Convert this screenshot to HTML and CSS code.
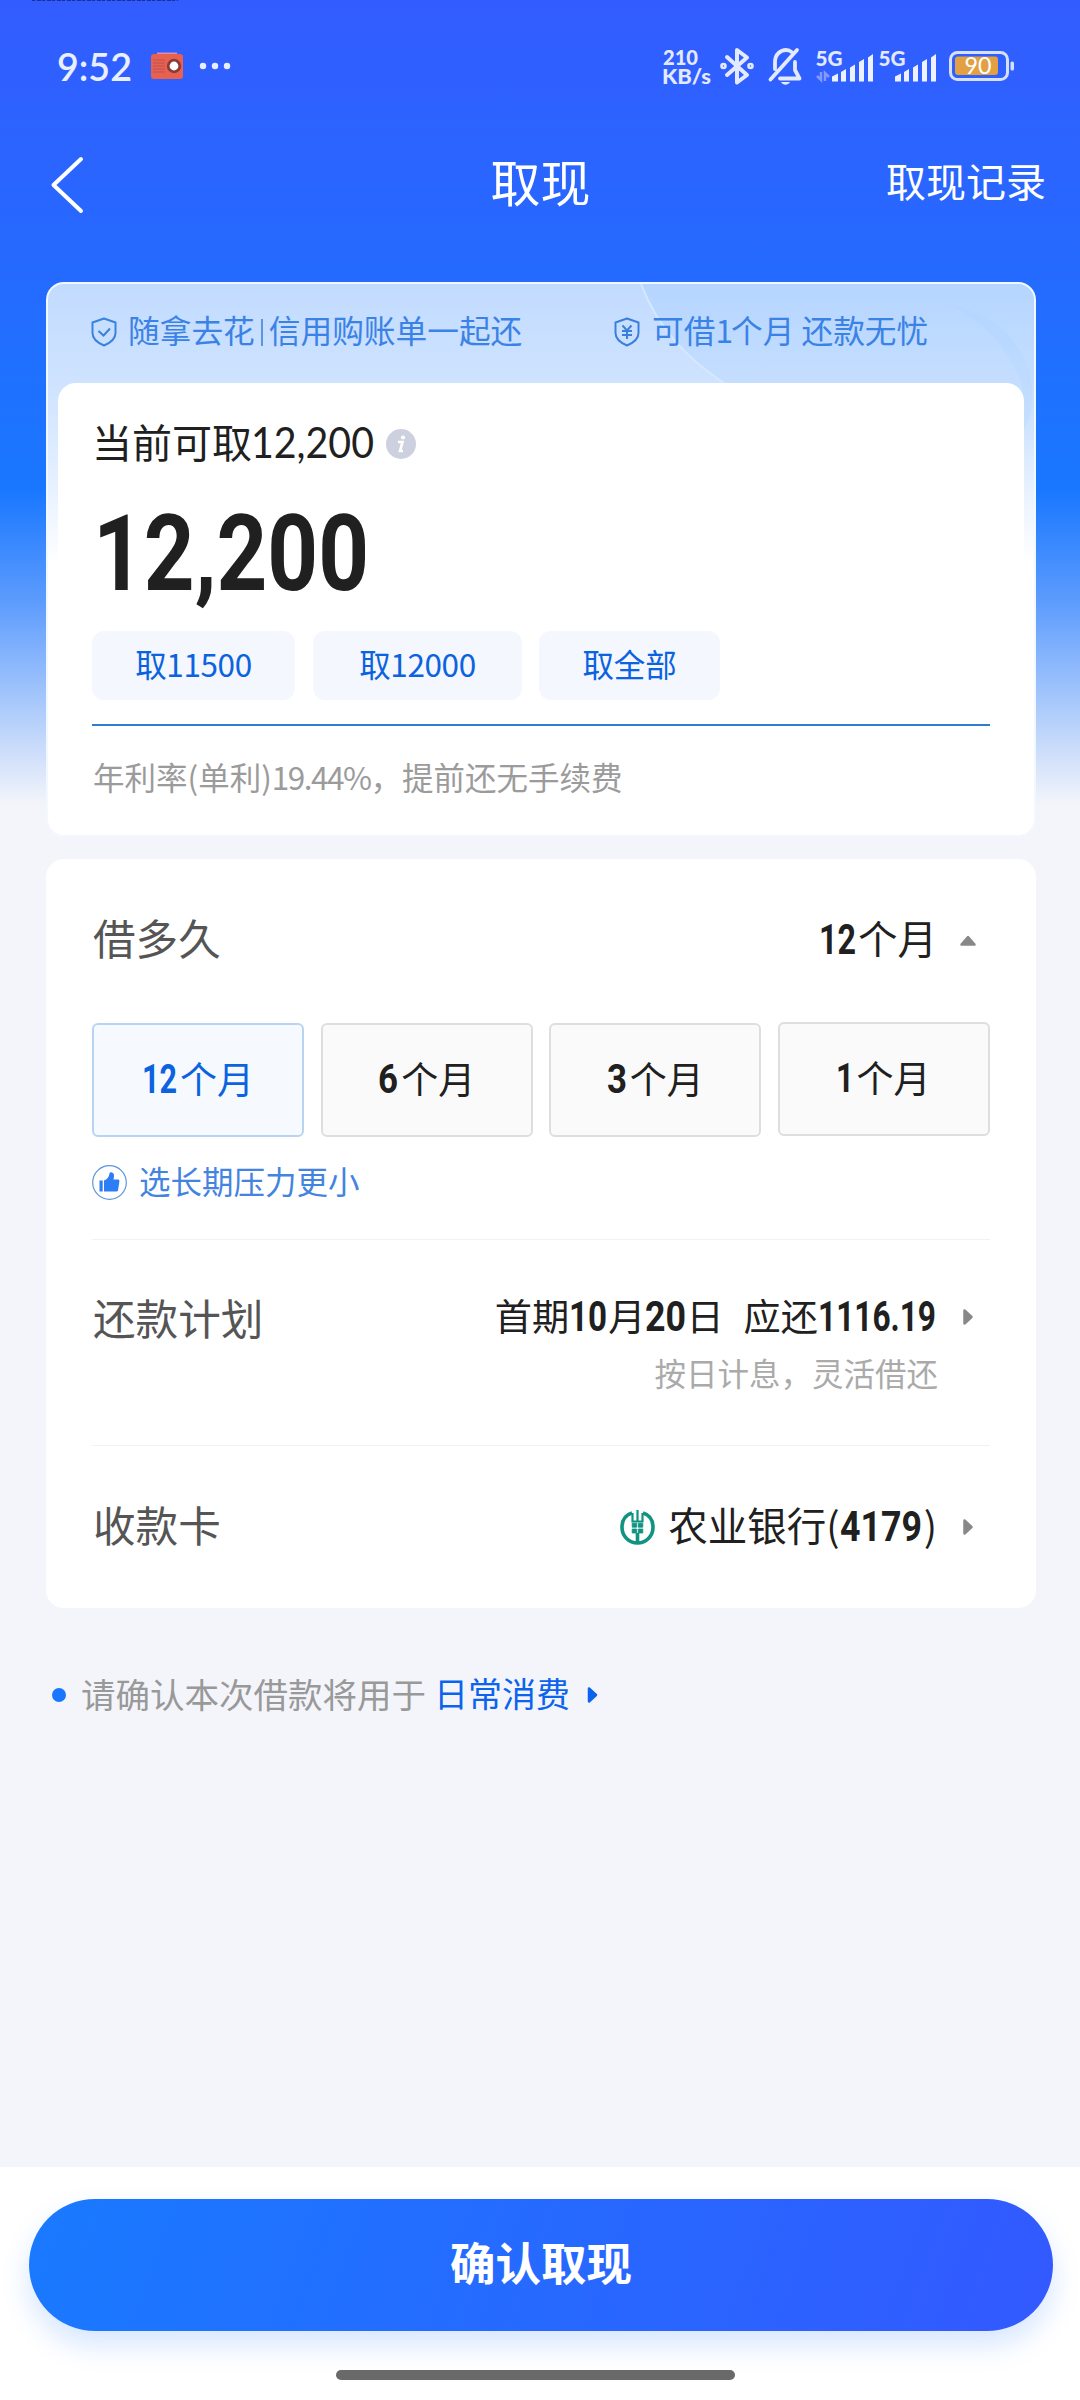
FILE: index.html
```html
<!DOCTYPE html>
<html lang="zh-CN">
<head>
<meta charset="utf-8">
<title>取现</title>
<link rel="stylesheet" href="styles.css">
</head>
<body>
<div class="screen">
  <div class="topmark"></div>
  <header class="status">
    <svg class="clock" width="74" height="28"><text x="-1" y="29" textLength="75" lengthAdjust="spacingAndGlyphs">9:52</text></svg>
    <svg class="radio" width="32" height="27" viewBox="0 0 32 27"><path d="M6 1.5h20" stroke="#d78fb8" stroke-width="2"/><rect y="2" width="32" height="25" rx="3" fill="#e8614f"/><path d="M2 8h12M2 11h12M2 14h12M2 17h12M2 20h12" stroke="#b9505c" stroke-width="1"/><circle cx="23" cy="14" r="7.2" fill="#8b3b35"/><circle cx="23" cy="14" r="4.4" fill="#fff"/></svg>
    <svg class="dots" width="32" height="8" viewBox="0 0 32 8" fill="#e9eeff"><circle cx="4" cy="4" r="3.2"/><circle cx="16" cy="4" r="3.2"/><circle cx="28" cy="4" r="3.2"/></svg>
    <div class="spacer"></div>
    <svg class="speed" width="48" height="36" viewBox="0 0 48 36"><text x="0" y="16.500" textLength="35" lengthAdjust="spacingAndGlyphs">210</text><text x="-1" y="35.500" textLength="49" lengthAdjust="spacingAndGlyphs">KB/s</text></svg>
    <svg class="bt" width="34" height="38" viewBox="0 0 34 38" fill="none" stroke="#e3e9ff" stroke-width="4" stroke-linejoin="round" stroke-linecap="round"><path d="M7 10L27 28L17 35.500V3L27 10.500L7 28"/><circle cx="3.500" cy="19" r="1.300"/><circle cx="30.500" cy="19" r="1.300"/></svg>
    <svg class="bell" width="34" height="38" viewBox="0 0 34 38" fill="none" stroke="#e3e9ff" stroke-width="3.800" stroke-linejoin="round" stroke-linecap="round"><path d="M7 22V15C7 7 13 3 18 3C20 3 22 3.500 23.500 5M29 3L2.500 32.500M12 31.500H31.500L27 23V15"/><path d="M13 35h9c-2 3.500-7 3.500-9 0z" fill="#e3e9ff" stroke="none"/></svg>
    <svg class="signal" width="58" height="34" viewBox="0 0 58 34"><text x="-.500" y="17" textLength="27" lengthAdjust="spacingAndGlyphs">5G</text><g fill="#edf1ff"><path d="M16 27.500l6-3v8h-6zM25 23l5-3v12.500h-5zM34 18.500l5-3v17h-5zM43 13l5-3v22.500h-5zM52 8.500l5-3.500v27.500h-5z"/></g><path d="M5 23v8l-4-4M9 32v-8l4 4" fill="none" stroke="#8498ff" stroke-width="2.500"/></svg>
    <svg class="signal second" width="58" height="34" viewBox="0 0 58 34"><text x="-.500" y="17" textLength="27" lengthAdjust="spacingAndGlyphs">5G</text><g fill="#edf1ff"><path d="M16 27.500l6-3v8h-6zM25 23l5-3v12.500h-5zM34 18.500l5-3v17h-5zM43 13l5-3v22.500h-5zM52 8.500l5-3.500v27.500h-5z"/></g></svg>
    <svg class="battery" width="66" height="30" viewBox="0 0 66 30"><rect x="1.500" y="1.500" width="57" height="27" rx="7" fill="none" stroke="#d5e0ff" stroke-width="3"/><rect x="6" y="5.500" width="43" height="18.500" rx="3" fill="#e2a043"/><rect x="61.500" y="10.500" width="3.500" height="9" rx="1.500" fill="#d5e0ff"/><text x="15.500" y="23.300" textLength="27" lengthAdjust="spacingAndGlyphs">90</text></svg>
  </header>

  <nav class="nav">
    <svg class="back" width="34" height="58" viewBox="0 0 34 58"><path d="M31 3L3.500 29L31 55" fill="none" stroke="#fff" stroke-width="4" stroke-linecap="round" stroke-linejoin="round"/></svg>
    <h1>取现</h1>
    <a class="records">取现记录</a>
  </nav>

  <section class="quota">
    <svg class="arcs" width="986" height="300" viewBox="0 0 986 300"><defs><linearGradient id="g" x1="0" y1="0" x2="0" y2="1"><stop offset="0" stop-color="#aed2ff" stop-opacity=".6"/><stop offset=".6" stop-color="#b9d8ff" stop-opacity=".3"/><stop offset="1" stop-color="#fff" stop-opacity="0"/></linearGradient></defs><path d="M593 0C610 45 640 75 676 99L986 240V0z" fill="url(#g)"/><path d="M593 0C610 45 640 75 676 99" fill="none" stroke="#d6e8ff" stroke-width="2"/><path d="M900 20C950 30 984 65 984 110C984 130 980 140 974 148V100C960 60 930 35 900 20z" fill="#a9d1ff" opacity=".2"/></svg>
    <div class="perks">
      <svg width="26" height="30" viewBox="0 0 26 30" fill="none" stroke="#3b82dd" stroke-width="2"><path d="M13 1.500L24.500 5.500V16C24.500 22 19 26 13 28.500C7 26 1.500 22 1.500 16V5.500z" stroke-linejoin="round"/><path d="M7.500 14l5 4.500L19 11.500"/></svg>
      <span class="perk-a">随拿去花<i></i>信用购账单一起还</span>
      <svg class="yen" width="26" height="30" viewBox="0 0 26 30" fill="none" stroke="#3b7fdc" stroke-width="2"><path d="M13 1.500L24.500 5.500V16C24.500 22 19 26 13 28.500C7 26 1.500 22 1.500 16V5.500z" stroke-linejoin="round"/><path d="M8.500 8.500l4.500 5l4.500-5M13 13.500V22M8 14h10M8 18h10"/></svg>
      <span class="perk-b">可借<span>1</span>个月&nbsp;还款无忧</span>
    </div>
    <div class="amount">
      <div class="avail"><span>当前可取</span><svg class="lat" width="124" height="31"><text x="-1" y="31" textLength="123" lengthAdjust="spacingAndGlyphs">12,200</text></svg><svg class="info" width="30" height="30" viewBox="0 0 30 30"><circle cx="15" cy="15" r="15" fill="#cdd0df"/><circle cx="17" cy="8.500" r="2.100" fill="#fff"/><path d="M12 13h4.500l-2.500 9h3" fill="none" stroke="#fff" stroke-width="2.600"/></svg></div>
      <svg class="num big" width="270" height="77"><text x="-4" y="77" textLength="276" lengthAdjust="spacingAndGlyphs">12,200</text></svg>
      <div class="chips"><span class="c1">取11500</span><span class="c2">取12000</span><span class="c3">取全部</span></div>
      <p class="rate">年利率(单利)<span>19.44%</span>，提前还无手续费</p>
    </div>
  </section>

  <section class="details">
    <div class="row term">
      <span class="label">借多久</span>
      <span class="value"><svg class="num" width="37" height="30"><text x="0" y="30" textLength="37" lengthAdjust="spacingAndGlyphs">12</text></svg>个月</span>
      <svg class="caret" width="18" height="16" viewBox="0 0 18 16"><path d="M2.500 12.500L9 5l6.500 7.500z" fill="#888" stroke="#888" stroke-width="2.500" stroke-linejoin="round"/></svg>
    </div>
    <div class="options">
      <div class="opt on"><svg class="num" width="35" height="28"><text x="0" y="27" textLength="35" lengthAdjust="spacingAndGlyphs">12</text></svg>个月</div>
      <div class="opt"><svg class="num" width="20" height="28"><text x="0" y="27" textLength="20" lengthAdjust="spacingAndGlyphs">6</text></svg>个月</div>
      <div class="opt"><svg class="num" width="20" height="28"><text x="0" y="27" textLength="20" lengthAdjust="spacingAndGlyphs">3</text></svg>个月</div>
      <div class="opt last"><svg class="num" width="16" height="28"><text x="-1" y="27" textLength="18" lengthAdjust="spacingAndGlyphs">1</text></svg>个月</div>
    </div>
    <div class="hint"><svg width="35" height="35" viewBox="0 0 35 35"><circle cx="17.500" cy="17.500" r="16.800" fill="none" stroke="#5d96dc" stroke-width="1.200"/><path d="M7.500 15.500h3.200v11H7.500zM12 15.500C15 14.500 17 12 17.500 8.500C18 6.500 21.500 7 22 10C22.200 12 21.500 13.500 21.500 14.500H26.500C27.500 15 27.500 16 27.300 17L26 25.500C25.500 26.300 25 26.500 24 26.500H12z" fill="#2c7df6"/></svg><span>选长期压力更小</span></div>
    <div class="row plan">
      <span class="label">还款计划</span>
      <div class="stack">
        <span class="value">首期<svg class="num" width="39" height="31"><text x="0" y="31" textLength="38" lengthAdjust="spacingAndGlyphs">10</text></svg>月<svg class="num" width="41" height="31"><text x="0" y="31" textLength="41" lengthAdjust="spacingAndGlyphs">20</text></svg>日<b class="gap"></b>应还<svg class="num" width="119" height="31"><text x="0" y="31" textLength="118" lengthAdjust="spacingAndGlyphs">1116.19</text></svg></span>
        <span class="sub">按日计息，灵活借还</span>
      </div>
      <svg class="caret" width="18" height="18" viewBox="0 0 18 18"><path d="M4.500 2.500L11.500 9L4.500 15.500z" fill="#888" stroke="#888" stroke-width="2.500" stroke-linejoin="round"/></svg>
    </div>
    <div class="row card">
      <span class="label">收款卡</span>
      <span class="value"><svg class="bank" width="35" height="35" viewBox="0 0 35 35" fill="none" stroke="#109381"><path d="M12 3C5 5 2 11 2 17.500C2 26 9 33 17.500 33S33 26 33 17.500C33 11 30 5 23 3" stroke-width="3.600"/><path d="M17.500 0V11M12.500 3v8.500h10V3" stroke-width="2.200"/><path d="M17.500 23V34" stroke-width="3.600"/><path d="M12.200 13.200h4.500v4h-4.500zM18.300 13.200h4.500v4h-4.500zM12.200 19h4.500v4h-4.500zM18.300 19h4.500v4h-4.500z" fill="#109381" stroke-width=".8"/></svg>农业银行<span class="paren">(</span><svg class="num" width="84" height="31"><text x="0" y="31" textLength="82" lengthAdjust="spacingAndGlyphs">4179</text></svg><span class="paren">)</span></span>
      <svg class="caret" width="18" height="18" viewBox="0 0 18 18"><path d="M4.500 2.500L11.500 9L4.500 15.500z" fill="#888" stroke="#888" stroke-width="2.500" stroke-linejoin="round"/></svg>
    </div>
  </section>

  <div class="purpose"><i class="bullet"></i><span>请确认本次借款将用于</span><a>日常消费</a><svg width="14" height="18" viewBox="0 0 14 18"><path d="M3 2.500L10 9L3 15.500z" fill="#0b63ee" stroke="#0b63ee" stroke-width="2.500" stroke-linejoin="round"/></svg></div>

  <footer class="footer">
    <button class="confirm">确认取现</button>
    <div class="homebar"></div>
  </footer>
</div>
</body>
</html>
```
FILE: styles.css
```css
* { box-sizing: border-box; }
body {
  margin: 0;
  font-family: "Noto Sans CJK SC", sans-serif;
  color: #202020;
}
svg { flex: none; overflow: visible; }
h1, p { margin: 0; font-weight: 400; }
.screen {
  position: relative;
  width: 1080px;
  height: 2400px;
  display: flex;
  flex-direction: column;
  background: linear-gradient(180deg, #335cff 0, #2669ff 250px, #1977ff 490px, #5c9bfd 600px, #f4f5fa 805px);
}
.topmark {
  position: absolute;
  left: 32px;
  top: 0;
  width: 146px;
  height: 1px;
  background: repeating-linear-gradient(90deg, #1b2f9c 0 3px, #2f55e6 3px 5px, #1b2f9c 5px 9px, #2f55e6 9px 10px);
}

/* status bar */
.status { height: 131px; padding: 0 65px 0 58px; display: flex; align-items: center; }
.status text { fill: #e3e9ff; font-family: "Lato", sans-serif; font-weight: 900; font-size: 21.500px; }
.status .clock text { font-size: 38px; font-weight: 600; fill: #e9efff; }
.status .battery text { font-size: 24px; font-weight: 400; fill: #fff; }
.radio { margin-left: 19px; }
.dots { margin-left: 16px; }
.spacer { flex: 1; }
.bt { margin-left: 9px; }
.bell { margin-left: 14px; }
.signal { margin-left: 14px; }
.signal.second { margin-left: 5px; }
.battery { margin-left: 12px; }

/* navigation */
.nav { height: 151px; padding: 0 34px 50px 50px; display: grid; grid-template-columns: 1fr auto 1fr; align-items: center; color: #fff; }
.back { margin-top: 6px; }
.nav h1 { font-size: 50px; line-height: 60px; margin: -4px 0 0 -15px; }
.records { justify-self: end; font-size: 40px; line-height: 60px; margin-top: -3px; }

/* quota card */
.quota {
  position: relative;
  width: 990px;
  height: 555px;
  margin: 0 0 0 46px;
  padding: 0 10px;
  border: 2px solid #f2f8ff;
  border-radius: 18px;
  background: linear-gradient(180deg, #c1dbff 0, #cfe3ff 100px, #e3efff 190px, #fff 280px);
  overflow: hidden;
}
.arcs { position: absolute; left: 0; top: 0; }
.perks { position: relative; height: 99px; padding-left: 33px; display: flex; align-items: center; font-size: 31.700px; line-height: 40px; color: #3b82e6; font-weight: 400; }
.perks svg { margin-top: -4px; }
.perk-a { margin: -9px 0 0 11px; width: 396px; }
.perk-a i { display: inline-block; width: 2px; height: 27px; margin: 0 6px 0 6px; background: #5b96e6; vertical-align: -3px; }
.perks .yen { margin-left: 90px; }
.perk-b { margin: -9px 0 0 12px; }
.perk-b span { letter-spacing: -2px; }
.amount { position: relative; height: 452px; background: #fff; border-radius: 18px; padding: 30px 34px 0; }
.avail { display: flex; align-items: center; height: 56px; font-size: 40px; line-height: 56px; }
.avail .lat { margin-top: 3px; }
.lat text { font-family: "Lato", sans-serif; font-size: 42px; fill: currentColor; }
.avail .info { margin-left: 10px; margin-top: 5px; }
.num { vertical-align: baseline; }
.num text { font-family: "Roboto", sans-serif; font-weight: 700; font-size: 43px; fill: currentColor; }
.big { display: block; margin: 44px 0 0 5px; }
.big text { font-size: 106px; }
.chips { display: flex; margin-top: 41px; height: 69px; }
.chips span { height: 69px; line-height: 65px; border-radius: 12px; background: #f4f7fd; color: #0b63e0; font-size: 31.500px; text-align: center; letter-spacing: -.2px; }
.chips .c1, .chips .c2 { letter-spacing: -.4px; }
.c1 { width: 203px; margin-right: 18px; }
.c2 { width: 209px; margin-right: 17px; }
.c3 { width: 181px; }
.rate { margin: 24px 0 0 0; border-top: 2px solid #2f7dcc; padding: 27px 0 0 1px; font-size: 31.500px; line-height: 46px; color: #9b9b9b; white-space: nowrap; }
.rate span { letter-spacing: -1.500px; }

/* details card */
.details { width: 990px; height: 749px; margin: 22px 0 0 46px; padding: 0 46px; border-radius: 18px; background: #fff; }
.row { display: flex; align-items: center; }
.label { font-size: 42.600px; line-height: 60px; color: #555; margin-right: auto; margin-left: 1px; }
.value { font-size: 39.500px; line-height: 56px; white-space: nowrap; }
.caret { margin: 0 12px 0 23px; }
.term { height: 164px; padding-bottom: 9px; }
.term .caret { margin: 7px 13px 0 22px; }
.term .num { margin-right: 2px; }
.options { display: grid; grid-template-columns: repeat(4, 212px); justify-content: space-between; }
.opt { height: 114px; border: 2px solid #dedede; border-radius: 6px; background: #fafafa; font-size: 37px; line-height: 106px; text-align: center; }
.opt .num { margin-right: 3px; }
.opt .num text { font-size: 40px; }
.opt.on { color: #0b63e0; border-color: #b9d4f2; background: #f6faff; }
.opt.last { margin-top: -1px; }
.hint { height: 103px; padding-bottom: 12px; display: flex; align-items: center; color: #4384e0; font-size: 31.500px; line-height: 46px; border-bottom: 1px solid #f2f2f2; }
.hint span { margin: -5px 0 0 12px; }
.plan { height: 206px; border-bottom: 1px solid #f2f2f2; align-items: flex-start; padding-top: 47px; }
.stack { display: flex; flex-direction: column; align-items: flex-end; }
.plan .value { font-size: 37.200px; }
.gap { display: inline-block; width: 20px; }
.sub { font-size: 31.500px; line-height: 46px; color: #aaa; margin: 6px -1px 0 0; }
.plan .caret { margin-top: 21px; }
.card { height: 161px; padding-bottom: 6px; }
.card .caret { margin-top: 7px; }
.bank { margin-right: 13px; vertical-align: -4px; }

/* purpose note */
.purpose { display: flex; align-items: center; height: 60px; margin-top: 57px; padding-left: 52px; font-size: 34.500px; line-height: 60px; color: #999; }
.purpose span, .purpose a { margin-top: -4px; }
.bullet { width: 14px; height: 14px; border-radius: 50%; background: #1976ff; margin-right: 15px; }
.purpose a { color: #0b63ee; margin-left: 8px; font-size: 34px; }
.purpose svg { margin-left: 16px; }

/* footer */
.footer { height: 233px; margin-top: auto; padding-top: 32px; background: #fff; display: flex; flex-direction: column; align-items: center; }
.confirm { width: 1024px; height: 132px; margin-left: 2px; border: 0; border-radius: 66px; background: linear-gradient(110deg, #197aff 0, #3359ff 100%); box-shadow: 0 14px 28px rgba(25, 118, 255, .18); color: #fff; font: 700 45.500px/122px "Noto Sans CJK SC", sans-serif; padding: 0 0 8px; }
.homebar { width: 399px; height: 10px; margin: 39px 9px 0 0; border-radius: 5px; background: #696969; }
```
